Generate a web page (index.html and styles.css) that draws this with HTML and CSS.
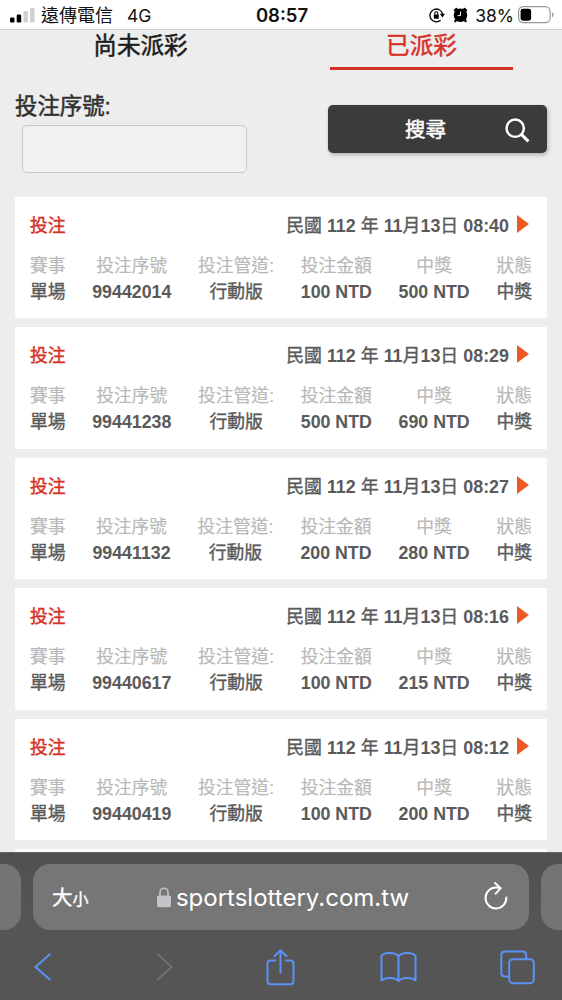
FILE: index.html
```
<!DOCTYPE html>
<html lang="zh-Hant">

<head>
    <meta charset="UTF-8">
    <meta name="viewport" content="width=device-width, initial-scale=1.0">
    <title>投注紀錄</title>
    <link rel="stylesheet" href="styles.css">
</head>

<body>
    <div class="status-bar">
        <div class="status-left">
            <svg class="signal" width="26" height="16" viewBox="0 0 26 16">
                <rect x="0" y="10.5" width="4.5" height="5" rx="1.3" fill="#000"/>
                <rect x="6.7" y="7.5" width="4.5" height="8" rx="1.3" fill="#000"/>
                <rect x="13.5" y="4" width="4.5" height="11.5" rx="1.3" fill="#d0d0d0"/>
                <rect x="20" y="1" width="4.5" height="14.5" rx="1.3" fill="#d0d0d0"/>
            </svg>
            <span class="carrier">遠傳電信</span>
            <span class="network">4G</span>
        </div>
        <div class="clock">08:57</div>
        <div class="status-right">
            <svg width="16" height="16" viewBox="0 0 16 16">
                <path d="M11.6 13.2A6.4 6.4 0 1 1 13.6 7" fill="none" stroke="#000" stroke-width="1.3"/>
                <path d="M10.8 6.8h5.2l-2.6 3.6z" fill="#000"/>
                <rect x="4.8" y="7.4" width="5" height="4.4" rx=".7" fill="#000"/>
                <path d="M5.8 7.8V6.2a1.5 1.5 0 0 1 3 0v1.6" fill="none" stroke="#000" stroke-width="1.1"/>
            </svg>
            <svg class="alarm" width="15" height="16" viewBox="0 0 15 16">
                <circle cx="7.5" cy="8.2" r="6.7" fill="#000"/>
                <path d="M2 3.4l1.6-1.4M13 3.400l-1.600-1.400M3.400 12.800l-1 1.200M11.600 12.800l1 1.200" stroke="#000" stroke-width="2.400" stroke-linecap="round"/>
                <path d="M7.500 4.600v4H4.600" fill="none" stroke="#fff" stroke-width="1"/>
            </svg>
            <span class="percent">38%</span>
            <svg width="36" height="18" viewBox="0 0 36 18">
                <rect x=".6" y=".7" width="31.5" height="16" rx="4.6" fill="#fff" stroke="#999" stroke-width="1.2"/>
                <rect x="2.6" y="2.7" width="10.5" height="12" rx="2.4" fill="#000"/>
                <path d="M34 6.2q1.6.8 1.6 2.6T34 11.4z" fill="#999"/>
            </svg>
        </div>
    </div>

    <div class="page">
        <div class="tabs">
            <div class="tab">尚未派彩</div>
            <div class="tab active">已派彩</div>
        </div>

        <div class="search">
            <div class="field">
                <label for="serial">投注序號:</label>
                <input type="text" id="serial">
            </div>
            <button class="search-btn">
                <span>搜尋</span>
                <svg width="25" height="25" viewBox="0 0 25 25" fill="none" stroke="#fff">
                    <circle cx="10.2" cy="10.2" r="8.7" stroke-width="2.4"/>
                    <path d="M16.4 16.4l7 7" stroke-width="3"/>
                </svg>
            </button>
        </div>

        <div class="bet-list" id="bet-list"></div>
    </div>

    <div class="browser">
        <div class="address-row">
            <div class="side-tab"></div>
            <div class="address">
                <div class="text-size">大<small>小</small></div>
                <div class="url">
                    <svg width="14" height="21" viewBox="0 0 14 21">
                        <rect x="0" y="8.5" width="14" height="11.8" rx="2" fill="#c3c2cb"/>
                        <path d="M3 9V5.2a4 4 0 0 1 8 0V9" fill="none" stroke="#c3c2cb" stroke-width="1.6"/>
                    </svg>
                    <span>sportslottery.com.tw</span>
                </div>
                <svg class="reload" width="24" height="30" viewBox="0 0 24 30" fill="none" stroke="#fff" stroke-width="2" stroke-linecap="round" stroke-linejoin="round">
                    <path d="M22.3 15.5A10.4 10.4 0 1 1 12 5.6c1.8 0 3.2.1 4.5.5"/>
                    <path d="M11 1l5.7 5.2-5 5.5"/>
                </svg>
            </div>
            <div class="side-tab right"></div>
        </div>
        <div class="toolbar">
            <svg width="37" height="30" viewBox="0 0 18 30"><path d="M16.3 2.3L2 15l14.3 12.5"/></svg>
            <svg class="disabled" width="37" height="30" viewBox="-3.5 0 18 30"><path d="M1.5 2.3L15.8 15 1.5 27.5"/></svg>
            <svg class="share" width="37" height="38" viewBox="0 0 30 38">
                <path d="M9.8 12.6H5.2q-3.2 0-3.2 3.2V33q0 3.2 3.2 3.2h19.6q3.2 0 3.2-3.2V15.8q0-3.2-3.2-3.2h-4.6"/>
                <path d="M15 25V2.2M9 8.2l6-6 6 6"/>
            </svg>
            <svg width="37" height="32" viewBox="0 0 37 32">
                <path d="M18.5 5.2C15 1 5 1 1.5 4.6v24.8c4-3.4 13.5-3.4 17 .6 3.5-4 13-4 17-.6V4.6C32 1 22 1 18.5 5.2zM18.5 5.2V30"/>
            </svg>
            <svg width="37" height="35" viewBox="0 0 35 35">
                <path d="M9 26.5H5q-3.7 0-3.7-3.7V5.2q0-3.7 3.7-3.7h17.5q3.7 0 3.7 3.7V9"/>
                <rect x="9.2" y="9.2" width="24.6" height="24" rx="3.7"/>
            </svg>
        </div>
    </div>

    <script>
        const bets = [
            { time: '08:40', id: '99442014', amount: 100, win: 500 },
            { time: '08:29', id: '99441238', amount: 500, win: 690 },
            { time: '08:27', id: '99441132', amount: 200, win: 280 },
            { time: '08:16', id: '99440617', amount: 100, win: 215 },
            { time: '08:12', id: '99440419', amount: 100, win: 200 }
        ];

        const list = document.getElementById('bet-list');

        bets.forEach(bet => {
            const card = document.createElement('div');
            card.classList.add('bet');
            card.innerHTML = `
                <div class="bet-head">
                    <span class="bet-title">投注</span>
                    <span class="bet-date">民國 <b>112</b> 年 <b>11</b>月<b>13</b>日 <b>${bet.time}</b></span>
                    <span class="arrow"></span>
                </div>
                <div class="bet-info">
                    <div><span>賽事</span>單場</div>
                    <div><span>投注序號</span><b>${bet.id}</b></div>
                    <div><span>投注管道:</span>行動版</div>
                    <div><span>投注金額</span><b>${bet.amount} NTD</b></div>
                    <div><span>中獎</span><b>${bet.win} NTD</b></div>
                    <div><span>狀態</span>中獎</div>
                </div>
            `;
            list.appendChild(card);
        });

        // next card, only its top edge shows above the browser bar
        const next = document.createElement('div');
        next.classList.add('bet');
        list.appendChild(next);
    </script>
</body>

</html>
```
FILE: styles.css
```
* {
    box-sizing: border-box;
}

body {
    margin: 0;
    height: 1000px;
    display: flex;
    flex-direction: column;
    overflow: hidden;
    background-color: #ededed;
    font-family: "Liberation Sans", "Noto Sans CJK TC", sans-serif;
}

svg {
    display: block;
    flex: none;
}

/* status bar */
.status-bar {
    flex: none;
    height: 30px;
    padding: 1px 8px 0 10px;
    display: grid;
    grid-template-columns: 1fr auto 1fr;
    align-items: center;
    background-color: #fff;
    border-bottom: 1px solid #c9cccb;
    color: #111;
    font-family: Inter, "Noto Sans CJK TC", sans-serif;
}

.status-left,
.status-right {
    display: flex;
    align-items: center;
}

.status-right {
    justify-content: flex-end;
}

.carrier {
    margin-left: 5px;
    font-size: 18px;
    line-height: 27px;
}

.network {
    margin-left: 14px;
    font-size: 17.5px;
}

.clock {
    font-size: 18.5px;
    font-weight: 600;
}

.alarm {
    margin-left: 8px;
}

.percent {
    margin: 0 4px 0 7px;
    font-size: 17.5px;
}

/* page */
.page {
    flex: none;
    height: 822px;
    padding: 0 15px;
    overflow: hidden;
}

.tabs {
    display: flex;
    justify-content: space-between;
    height: 40px;
    padding: 0 34px;
}

.tab {
    width: 183px;
    text-align: center;
    color: #1c1c1c;
    font-size: 23.6px;
    line-height: 32px;
    -webkit-text-stroke: 0.5px;
}

.tab.active {
    color: #d53127;
    border-bottom: 3px solid #d53127;
}

.search {
    display: flex;
    justify-content: space-between;
    height: 127px;
    padding-top: 20px;
}

.field label {
    display: block;
    height: 35px;
    color: #303030;
    font-size: 22.4px;
    line-height: 33px;
    -webkit-text-stroke: 0.5px;
}

.field input {
    display: block;
    width: 225px;
    height: 48px;
    margin-left: 7px;
    border: 1px solid #c8c8c8;
    border-radius: 5px;
    background-color: #f1f1f1;
}

.search-btn {
    display: flex;
    align-items: center;
    justify-content: space-between;
    width: 219px;
    height: 48px;
    margin-top: 15px;
    padding: 0 17px 0 77px;
    border: none;
    border-radius: 5px;
    background-color: #3b3b3b;
    box-shadow: 1px 2px 4px rgba(0, 0, 0, 0.25);
    color: #fff;
    font-family: inherit;
    font-size: 20.5px;
    -webkit-text-stroke: 0.5px;
}

.search-btn span {
    margin-top: -2px;
}

.search-btn svg {
    margin-top: 2px;
}

.bet {
    height: 121.4px;
    margin-bottom: 9px;
    padding: 15px 15px 0;
    background-color: #fff;
    color: #5a5a5a;
    font-size: 17.8px;
    -webkit-text-stroke: 0.4px;
}

.bet b {
    -webkit-text-stroke: 0;
}

.bet-head {
    display: flex;
    align-items: center;
    height: 24px;
    margin-bottom: 17px;
}

.bet-title {
    color: #d53127;
}

.bet-date {
    margin-left: auto;
    font-size: 17.9px;
}

.arrow {
    margin: 0 3px 0 8px;
    border: 9px solid transparent;
    border-left: 12px solid #ee5a24;
    border-right: none;
}

.bet-info {
    display: flex;
    justify-content: space-between;
    line-height: 26px;
    text-align: center;
}

.bet-info div {
    height: 52px;
    white-space: nowrap;
}

.bet-info span {
    display: block;
    height: 26px;
    color: #b9b9b9;
    -webkit-text-stroke: 0.2px;
}

/* browser controls */
.browser {
    flex: 1;
    border-top: 1px solid #666;
    background: linear-gradient(#505050, #555 60px);
}

.address-row {
    display: flex;
    justify-content: space-between;
    height: 77px;
    padding-top: 11px;
}

.side-tab {
    width: 21px;
    border-radius: 0 17px 17px 0;
    background-color: #747474;
}

.side-tab.right {
    border-radius: 17px 0 0 17px;
}

.address {
    display: flex;
    align-items: center;
    justify-content: space-between;
    width: 496px;
    padding: 0 21px 0 19px;
    border-radius: 17px;
    background-color: #767676;
    color: #fff;
}

.text-size {
    width: 50px;
    margin-top: -3px;
    font-size: 20.5px;
    -webkit-text-stroke: 0.4px;
}

.text-size small {
    font-size: 16px;
}

.url {
    display: flex;
    align-items: center;
    gap: 5px;
    margin-right: 20px;
    font-family: Inter, sans-serif;
    font-size: 24px;
}

.toolbar {
    display: flex;
    align-items: center;
    justify-content: space-between;
    height: 74px;
    padding: 0 26px 0 24px;
}

.toolbar svg {
    fill: none;
    stroke: #5b92f5;
    stroke-width: 2;
    stroke-linecap: round;
    stroke-linejoin: round;
}

.toolbar .disabled {
    stroke: #717171;
}
```
